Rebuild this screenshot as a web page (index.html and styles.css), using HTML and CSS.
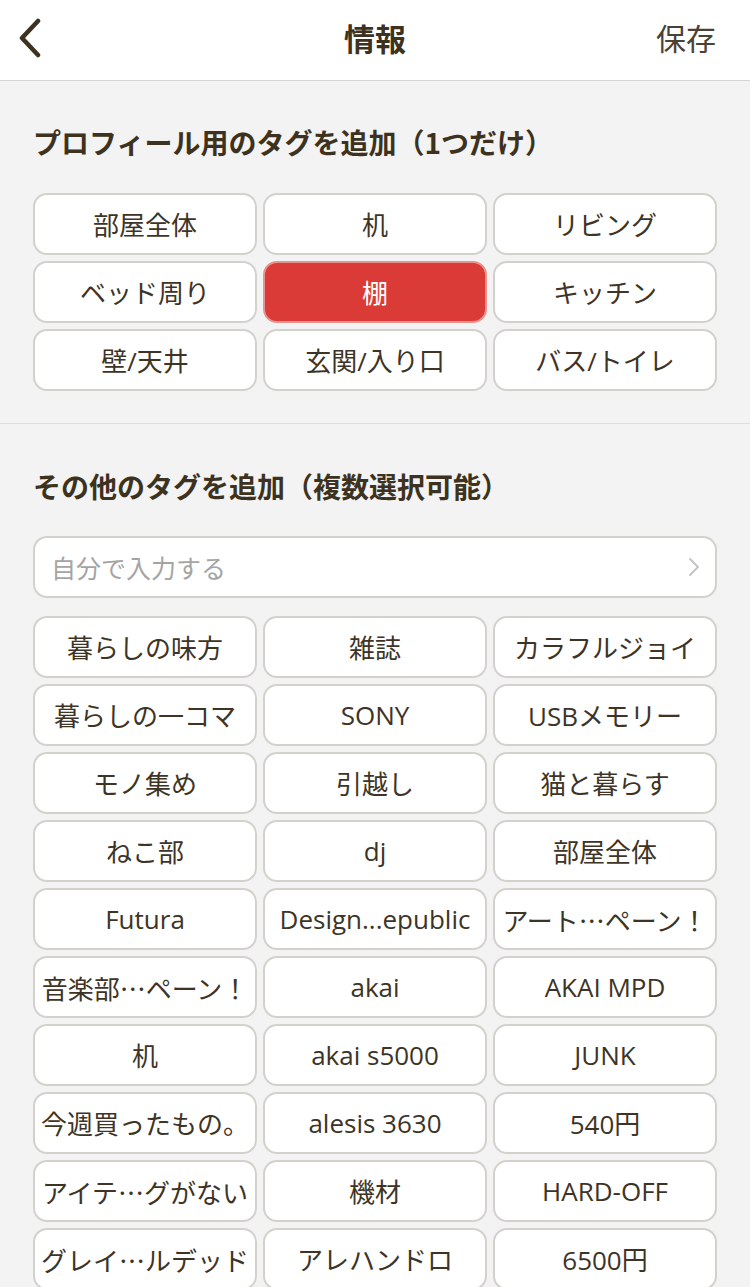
FILE: index.html
```html
<!DOCTYPE html>
<html lang="ja">
<head>
<meta charset="UTF-8">
<meta name="viewport" content="width=device-width, initial-scale=1.0">
<title>情報</title>
<link rel="stylesheet" href="styles.css">
</head>
<body>
<div class="header">
    <a class="back" href="#">
        <svg width="30" height="40" viewBox="0 0 30 40"><path d="M24 3 L8 20 L24 37" fill="none" stroke="#3d3220" stroke-width="4.5" stroke-linecap="round" stroke-linejoin="round"/></svg>
    </a>
    <h1 class="title">情報</h1>
    <a class="save" href="#">保存</a>
</div>

<div class="section first">
    <h2 class="section-title">プロフィール用のタグを追加（1つだけ）</h2>
    <div class="tags">
        <div class="tag">部屋全体</div>
        <div class="tag">机</div>
        <div class="tag">リビング</div>
        <div class="tag">ベッド周り</div>
        <div class="tag selected">棚</div>
        <div class="tag">キッチン</div>
        <div class="tag">壁/天井</div>
        <div class="tag">玄関/入り口</div>
        <div class="tag">バス/トイレ</div>
    </div>
</div>

<div class="section second">
    <h2 class="section-title">その他のタグを追加（複数選択可能）</h2>
    <div class="input-row">
        <span class="placeholder">自分で入力する</span>
        <svg width="14" height="22" viewBox="0 0 14 22"><path d="M3 3 L11 11 L3 19" fill="none" stroke="#c4c4c4" stroke-width="2" stroke-linecap="round" stroke-linejoin="round"/></svg>
    </div>
    <div class="tags">
        <div class="tag">暮らしの味方</div>
        <div class="tag">雑誌</div>
        <div class="tag">カラフルジョイ</div>
        <div class="tag">暮らしの一コマ</div>
        <div class="tag">SONY</div>
        <div class="tag">USBメモリー</div>
        <div class="tag">モノ集め</div>
        <div class="tag">引越し</div>
        <div class="tag">猫と暮らす</div>
        <div class="tag">ねこ部</div>
        <div class="tag">dj</div>
        <div class="tag">部屋全体</div>
        <div class="tag">Futura</div>
        <div class="tag">Design...epublic</div>
        <div class="tag ja">アート…ペーン！</div>
        <div class="tag ja">音楽部…ペーン！</div>
        <div class="tag">akai</div>
        <div class="tag">AKAI MPD</div>
        <div class="tag">机</div>
        <div class="tag">akai s5000</div>
        <div class="tag">JUNK</div>
        <div class="tag">今週買ったもの。</div>
        <div class="tag">alesis 3630</div>
        <div class="tag">540円</div>
        <div class="tag ja">アイテ…グがない</div>
        <div class="tag">機材</div>
        <div class="tag">HARD-OFF</div>
        <div class="tag ja">グレイ…ルデッド</div>
        <div class="tag">アレハンドロ</div>
        <div class="tag">6500円</div>
    </div>
</div>
</body>
</html>
```

FILE: styles.css
```css
body {
    font-family: "Open Sans", "Noto Sans CJK JP", sans-serif;
    margin: 0;
    padding: 0;
    background-color: #f3f3f3;
    color: #3d3426;
}
.header {
    height: 81px;
    background-color: #fff;
    border-bottom: 1px solid #d4d4d4;
    display: grid;
    grid-template-columns: 1fr auto 1fr;
    align-items: center;
    padding: 0 34px 0 14px;
    box-sizing: border-box;
}
.back {
    display: flex;
    margin-top: -4px;
}
.title {
    margin: -6px 0 0;
    font-family: "Noto Sans CJK JP", sans-serif;
    font-size: 31px;
    font-weight: bold;
    color: #3d3220;
    transform: translateX(10px);
}
.save {
    justify-self: end;
    margin-top: -6px;
    font-family: "Noto Sans CJK JP", sans-serif;
    font-size: 30px;
    color: #4a4234;
    text-decoration: none;
}
.section {
    padding: 0 33px 32px;
}
.section.first {
    padding-top: 41px;
    border-bottom: 1px solid #dedede;
}
.section.second {
    padding-top: 42px;
}
.section-title {
    margin: 0 0 31px;
    height: 40px;
    line-height: 40px;
    font-family: "Noto Sans CJK JP", sans-serif;
    font-size: 28px;
    font-weight: bold;
    color: #3d3220;
}
.second .section-title {
    margin-bottom: 30px;
}
.input-row {
    height: 62px;
    box-sizing: border-box;
    background-color: #fff;
    border: 2px solid #d3d1cc;
    border-radius: 14px;
    display: flex;
    align-items: center;
    justify-content: space-between;
    padding: 0 14px 0 16px;
    margin-bottom: 18px;
}
.placeholder {
    font-size: 25px;
    color: #a4a4a4;
}
.tags {
    display: grid;
    grid-template-columns: repeat(3, 1fr);
    gap: 6px;
}
.tag {
    height: 62px;
    box-sizing: border-box;
    background-color: #fff;
    border: 2px solid #d3d1cc;
    border-radius: 14px;
    display: flex;
    align-items: center;
    justify-content: center;
    font-size: 26px;
    white-space: nowrap;
    overflow: hidden;
    color: #3d3426;
}
.tag.ja {
    font-family: "Noto Sans CJK JP", sans-serif;
}
.tag.selected {
    background-color: #da3b36;
    border-color: #e8928f;
    color: #fff;
}
```
